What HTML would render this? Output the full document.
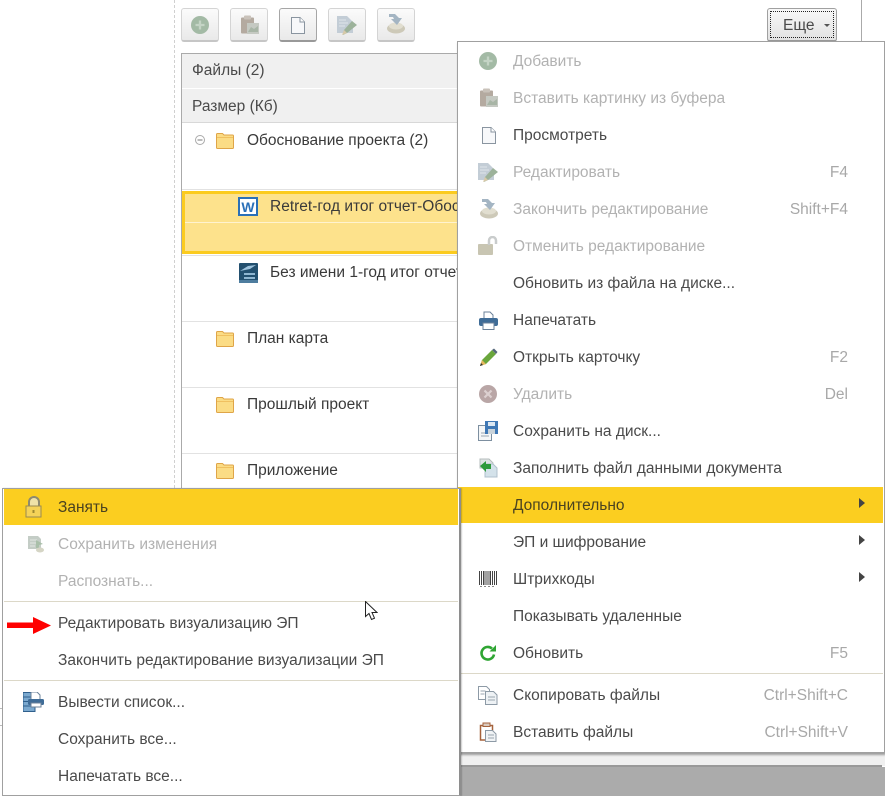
<!DOCTYPE html>
<html lang="ru"><head><meta charset="utf-8"><title>Меню</title>
<style>
html,body{margin:0;padding:0;background:#fff}
#p{position:relative;width:885px;height:796px;overflow:hidden;background:#fff;font:15.5px/20px "Liberation Sans",Arial,sans-serif;color:#4a4a4a}
#p div,#p svg{position:absolute}
.t{white-space:nowrap;height:20px;margin-top:2px}
.d{color:#b2b2b2}
.k{color:#a8a8a8;right:37px;white-space:nowrap;height:20px;margin-top:2px}
.b{top:8px;width:36px;height:31px;border:1px solid #d4d4d4;border-bottom:2px solid #c6c6c6;border-radius:3px;background:linear-gradient(#fbfbfb,#e9e9e9)}
.arr{left:859px;width:0;height:0;border-left:6px solid #444;border-top:5px solid transparent;border-bottom:5px solid transparent}
.hl{background:#fbce20}
.sep{height:1px;background:#dcd8c8}
.line{background:#e2e2e2;height:1px;left:182px;width:276px}
</style></head><body><div id="p">

<svg width="0" height="0" style="left:0;top:0">
<defs>
<symbol id="add" viewBox="0 0 20 20"><circle cx="10" cy="10" r="10" fill="#a3baa5"/><path d="M10 5v10M5 10h10" stroke="#c4d4c5" stroke-width="2.600"/></symbol>
<symbol id="paste" viewBox="0 0 20 20"><rect x="1" y="2.500" width="13" height="16" rx="1" fill="#b4aaa0"/><rect x="4" y="0.500" width="7" height="4" rx="1" fill="#c9c2ba"/><rect x="7" y="8" width="12" height="11" fill="#c5c9c2"/><path d="M8 17l3-5 3 2 4-3v6z" fill="#a8b5a6"/></symbol>
<symbol id="doc" viewBox="0 0 20 20"><path d="M3.500 2.500h8.500l4.500 4.500v11.500h-13z" fill="#f7f8fa" stroke="#8a95a0" stroke-width="1"/><path d="M12 2.500v4.500h4.500" fill="#fff" stroke="#8a95a0"/></symbol>
<symbol id="edit" viewBox="0 0 20 20"><path d="M0 1h10l6 6v11H0z" fill="#c3cdd6"/><path d="M2 5h7M2 8h9M2 11h6" stroke="#dfe5e9"/><path d="M15 6l5 4-10 8-4 2 1-5z" fill="#9cb29a"/><path d="M5 20l2-5 3 3z" fill="#d8c9a8"/></symbol>
<symbol id="finish" viewBox="0 0 20 20"><ellipse cx="10" cy="14.500" rx="9" ry="5" fill="#cdc9b8"/><ellipse cx="10" cy="12" rx="7" ry="3.500" fill="#e1ded0"/><path d="M3 0h6l4 4h3l-5 7-6-6h3L7 3H3z" fill="#a4b5c3"/></symbol>
<symbol id="folder" viewBox="0 0 20 18"><path d="M1.500 4V2.500q0-1 1-1h5l1.500 1.500h8.500q1 0 1 1v11.500q0 1-1 1h-15q-1 0-1-1z" fill="#fbdc85" stroke="#dfa548"/><path d="M2 5.500h16" stroke="#f0c060"/></symbol>
</defs>
</svg>

<!-- page frame -->
<div style="left:174px;top:0;height:488px;border-left:1px dashed #d0d0d0"></div>
<div style="left:861px;top:0;width:1px;height:41px;background:#aaa"></div>
<div style="left:0;top:708px;width:3px;height:1px;background:#bbb"></div>
<div style="left:0;top:725px;width:3px;height:1px;background:#bbb"></div>

<!-- toolbar -->
<div class="b" style="left:181px"></div>
<svg style="left:191px;top:16px" width="18" height="18"><use href="#add"/></svg>
<div class="b" style="left:230px"></div>
<svg style="left:240px;top:15px" width="20" height="20"><use href="#paste"/></svg>
<div class="b" style="left:279px;border-color:#a6a6a6;border-bottom-color:#999"></div>
<svg style="left:288px;top:15px" width="20" height="20"><use href="#doc"/></svg>
<div class="b" style="left:328px"></div>
<svg style="left:337px;top:15px" width="20" height="20"><use href="#edit"/></svg>
<div class="b" style="left:377px"></div>
<svg style="left:386px;top:14px" width="20" height="20"><use href="#finish"/></svg>
<div class="b" style="left:767px;width:68px;border-color:#a0a0a0;border-bottom-color:#999;background:linear-gradient(#f8f8f8,#e2e2e2)"></div>
<div style="left:770px;top:11px;width:62px;height:25px;border:1px dotted #222"></div>
<div class="t" style="left:783px;top:14px;font-size:15.5px">Еще</div>
<div style="left:824px;top:24px;width:0;height:0;border-top:3px solid #555;border-left:3px solid transparent;border-right:3px solid transparent"></div>

<!-- table -->
<div style="left:181px;top:53px;width:300px;height:435px;border:1px solid #aaa;border-right:0;border-width:1px 0 0 1px"></div>
<div style="left:182px;top:54px;width:276px;height:34px;background:#f0f0f0"></div>
<div style="left:182px;top:89px;width:276px;height:33px;background:#f0f0f0"></div>
<div style="left:182px;top:122px;width:276px;height:1px;background:#d8d8d8"></div>
<div class="t" style="left:192px;top:59px">Файлы (2)</div>
<div class="t" style="left:192px;top:95px">Размер (Кб)</div>

<svg style="left:194px;top:134px" width="12" height="12"><circle cx="6" cy="6" r="4.500" fill="#fff" stroke="#aaa"/><path d="M3.500 6h5" stroke="#777"/></svg>
<svg style="left:215px;top:132px" width="20" height="18"><use href="#folder"/></svg>
<div class="t" style="left:247px;top:129px;color:#3a3a3a">Обоснование проекта (2)</div>

<div class="line" style="top:189px"></div>
<div style="left:182px;top:191px;width:276px;height:57px;border:3px solid #fbcb1f;background:#fde28c"></div>
<div style="left:185px;top:222px;width:273px;height:1px;background:#fff3cf"></div>
<svg style="left:238px;top:197px" width="20" height="20"><rect x="1" y="1" width="18" height="17" fill="#fff" stroke="#2a70b8" stroke-width="2"/><text x="10" y="15" text-anchor="middle" font-family="Liberation Sans" font-weight="bold" font-size="14" fill="#2a70b8">W</text></svg>
<div class="t" style="left:270px;top:195px;color:#3a3a3a">Retret-год итог отчет-Обоснование</div>

<div class="line" style="top:255px"></div>
<svg style="left:239px;top:263px" width="20" height="20"><rect width="19" height="20" rx="1" fill="#23506f"/><path d="M1 8l8-5 8-1-6 4z" fill="#9fc4de"/><rect x="5" y="10" width="11" height="2" fill="#8fb6d0"/><rect x="5" y="14" width="11" height="2" fill="#8fb6d0"/><rect x="0" y="17" width="19" height="3" fill="#4e7d9f"/></svg>
<div class="t" style="left:270px;top:261px;color:#3a3a3a">Без имени 1-год итог отчет</div>

<div class="line" style="top:321px"></div>
<svg style="left:215px;top:330px" width="20" height="18"><use href="#folder"/></svg>
<div class="t" style="left:247px;top:327px;color:#3a3a3a">План карта</div>
<div class="line" style="top:387px"></div>
<svg style="left:215px;top:396px" width="20" height="18"><use href="#folder"/></svg>
<div class="t" style="left:247px;top:393px;color:#3a3a3a">Прошлый проект</div>
<div class="line" style="top:453px"></div>
<svg style="left:215px;top:462px" width="20" height="18"><use href="#folder"/></svg>
<div class="t" style="left:247px;top:459px;color:#3a3a3a">Приложение</div>

<!-- bottom strip -->
<div style="left:461px;top:752px;width:424px;height:14px;background:#f0f0f0"></div>
<div style="left:461px;top:765px;width:421px;height:2px;background:#999"></div>
<div style="left:461px;top:767px;width:424px;height:29px;background:#ababab"></div>

<!-- right menu -->
<div style="left:457px;top:41px;width:426px;height:710px;border:1px solid #a0a0a0;background:#fff;box-shadow:1px 2px 2px rgba(0,0,0,.35)"></div>
<div class="hl" style="left:458px;top:487px;width:425px;height:36px"></div>

<svg style="left:479px;top:52px" width="18" height="18"><use href="#add"/></svg>
<div class="t d" style="left:513px;top:50px">Добавить</div>
<svg style="left:479px;top:88px" width="20" height="20"><use href="#paste"/></svg>
<div class="t d" style="left:513px;top:87px">Вставить картинку из буфера</div>
<svg style="left:479px;top:125px" width="20" height="20"><use href="#doc"/></svg>
<div class="t" style="left:513px;top:124px">Просмотреть</div>
<svg style="left:478px;top:162px" width="20" height="20"><use href="#edit"/></svg>
<div class="t d" style="left:513px;top:161px">Редактировать</div><div class="k" style="top:161px">F4</div>
<svg style="left:479px;top:199px" width="20" height="20"><use href="#finish"/></svg>
<div class="t d" style="left:513px;top:198px">Закончить редактирование</div><div class="k" style="top:198px">Shift+F4</div>
<svg style="left:478px;top:236px" width="20" height="20"><rect x="0" y="8" width="15" height="11" rx="1" fill="#c8c5b2"/><path d="M11 9V4.500a3.500 3.500 0 0 1 7 0V8" fill="none" stroke="#c9cccc" stroke-width="2.500"/></svg>
<div class="t d" style="left:513px;top:235px">Отменить редактирование</div>
<div class="t" style="left:513px;top:272px">Обновить из файла на диске...</div>
<svg style="left:479px;top:311px" width="19" height="19"><path d="M5 8V1h6l3 3v4" fill="#fff" stroke="#6b8199"/><rect y="7" width="19" height="8" rx="2" fill="#3f6c97"/><rect x="4" y="12" width="11" height="6.500" fill="#fff" stroke="#6b8199"/></svg>
<div class="t" style="left:513px;top:309px">Напечатать</div>
<svg style="left:479px;top:348px" width="19" height="19"><path d="M1 18l2-6L13 2l4 4L7 16z" fill="#6aa63c"/><path d="M13 2l2-1.500 3.500 3.500L17 6z" fill="#55677a"/><path d="M1 18l2-6 4 4z" fill="#e6b65e"/><path d="M1 18l1-3 2 2z" fill="#333"/></svg>
<div class="t" style="left:513px;top:346px">Открыть карточку</div><div class="k" style="top:346px">F2</div>
<svg style="left:479px;top:385px" width="18" height="18"><circle cx="9" cy="9" r="9" fill="#b9a6a6"/><path d="M5.500 5.500l7 7M12.500 5.500l-7 7" stroke="#dcd0d0" stroke-width="2.200"/></svg>
<div class="t d" style="left:513px;top:383px">Удалить</div><div class="k" style="top:383px">Del</div>
<svg style="left:478px;top:421px" width="20" height="20"><rect x=".5" y="4.500" width="13" height="15" fill="#f4f6f7" stroke="#7d8fa0"/><path d="M3 12h6M3 15h8" stroke="#9aa6b0"/><rect x="7" y="0" width="13" height="13" fill="#3f78b5"/><rect x="10" y="1" width="7" height="4" fill="#dce8f3"/><rect x="10" y="8" width="7" height="5" fill="#c9d3da"/></svg>
<div class="t" style="left:513px;top:420px">Сохранить на диск...</div>
<svg style="left:479px;top:458px" width="19" height="20"><path d="M1 1h9l4 4v5H1z" fill="#dfe4e4" stroke="#b4bcbc"/><path d="M6 6h8l4 4v9H6z" fill="#d4e2ea" stroke="#b0c0cc"/><path d="M1 8l6-5v3h5v5H7v3z" fill="#2e9a3c"/></svg>
<div class="t" style="left:513px;top:457px">Заполнить файл данными документа</div>
<div class="t" style="left:513px;top:494px;color:#4a4320">Дополнительно</div><div class="arr" style="top:498px"></div>
<div class="t" style="left:513px;top:531px">ЭП и шифрование</div><div class="arr" style="top:535px"></div>
<svg style="left:479px;top:571px" width="18" height="16"><path d="M.5 0v14M2.500 0v14M4.500 0v14M6 0v14M8 0v14M10 0v14M11.500 0v14M13.500 0v14M15.500 0v14M17.500 0v14" stroke="#444" stroke-width="1"/><path d="M1 15.500h16" stroke="#888" stroke-dasharray="2 2"/></svg>
<div class="t" style="left:513px;top:568px">Штрихкоды</div><div class="arr" style="top:572px"></div>
<div class="t" style="left:513px;top:605px">Показывать удаленные</div>
<svg style="left:479px;top:644px" width="18" height="18"><path d="M15 10.500a6.300 6.300 0 1 1-2-6" fill="none" stroke="#2fa533" stroke-width="2.600"/><path d="M10.500 7.500H17V1z" fill="#2fa533"/></svg>
<div class="t" style="left:513px;top:642px">Обновить</div><div class="k" style="top:642px">F5</div>
<div class="sep" style="left:458px;top:673px;width:425px"></div>
<svg style="left:478px;top:686px" width="20" height="19"><path d="M.5.500h8l3 3v10H.5z" fill="#fff" stroke="#8d9aa6"/><path d="M7.500 5.500h8l3.500 3.500v9.500H7.500z" fill="#eef2f5" stroke="#8d9aa6"/><path d="M2.500 5h5M2.500 8h4M10 11h7M10 14h7" stroke="#9aa6b0"/></svg>
<div class="t" style="left:513px;top:684px">Скопировать файлы</div><div class="k" style="top:684px">Ctrl+Shift+C</div>
<svg style="left:479px;top:722px" width="18" height="20"><path d="M1.500 3.500h12V18h-12z" fill="#fff" stroke="#a5623c" stroke-width="1.500"/><rect x="4" y="1" width="7" height="3.500" fill="#d9c9bd" stroke="#a5623c"/><path d="M6.500 8.500h7l3.500 3.500v7.500H6.500z" fill="#f0f3f5" stroke="#8d9aa6"/><path d="M9 13h6M9 16h6" stroke="#9aa6b0"/></svg>
<div class="t" style="left:513px;top:721px">Вставить файлы</div><div class="k" style="top:721px">Ctrl+Shift+V</div>

<!-- left submenu -->
<div style="left:2px;top:488px;width:456px;height:306px;border:1px solid #a0a0a0;border-right:2px solid #8e8e8e;background:#fff;box-shadow:1px 0 1px rgba(0,0,0,.2)"></div>
<div class="hl" style="left:4px;top:489px;width:454px;height:36px"></div>
<svg style="left:25px;top:496px" width="18" height="22"><path d="M4 10V6a5 5 0 0 1 10 0v4" fill="#efe2a8" stroke="#8d8a70" stroke-width="2"/><rect x="1" y="10" width="15" height="11" fill="#f4d258" stroke="#9a8a50"/><rect x="7.500" y="14" width="2" height="3" fill="#a08a30"/></svg>
<div class="t" style="left:58px;top:496px;color:#4a4320">Занять</div>
<svg style="left:27px;top:535px" width="18" height="18"><path d="M1 1h10l3 3v10H1z" fill="#c4cdc6"/><path d="M3 5h7M3 8h6M3 11h5" stroke="#e2e6e2"/><path d="M9 5l7 4-4 1v3h-3z" fill="#a9bfa9"/><ellipse cx="13" cy="15" rx="4" ry="2.500" fill="#d5d5c5"/></svg>
<div class="t d" style="left:58px;top:533px">Сохранить изменения</div>
<div class="t d" style="left:58px;top:570px">Распознать...</div>
<div class="sep" style="left:4px;top:601px;width:454px"></div>
<svg style="left:7px;top:616px" width="45" height="19"><path d="M0 6.500h26V1l18 8.500L26 18v-6H0z" fill="#f00"/></svg>
<div class="t" style="left:58px;top:612px">Редактировать визуализацию ЭП</div>
<div class="t" style="left:58px;top:649px">Закончить редактирование визуализации ЭП</div>
<div class="sep" style="left:4px;top:680px;width:454px"></div>
<svg style="left:23px;top:692px" width="21" height="20"><rect width="12" height="19" y=".5" fill="#7ba9cf" stroke="#2f5f8c"/><path d="M0 5h12M0 9.500h12M0 14h12" stroke="#2f5f8c"/><path d="M8 8V0h6l3 3v5" fill="#fff" stroke="#6b8199"/><rect x="5" y="7" width="16" height="6" rx="1.500" fill="#3f6c97"/><rect x="8" y="11" width="10" height="4" fill="#fff" stroke="#6b8199"/></svg>
<div class="t" style="left:58px;top:691px">Вывести список...</div>
<div class="t" style="left:58px;top:728px">Сохранить все...</div>
<div class="t" style="left:58px;top:765px">Напечатать все...</div>

<!-- cursor -->
<svg style="left:365px;top:601px" width="13" height="20"><path d="M.5.500v15l3.500-3 2.500 6 3-1.300-2.500-5.700h5z" fill="#fff" stroke="#222" stroke-width="1"/></svg>
</div></body></html>
